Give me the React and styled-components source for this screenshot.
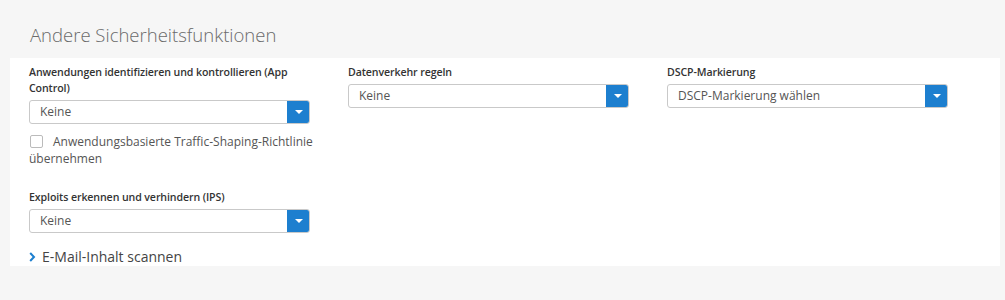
import React from "react";
import styled, { createGlobalStyle } from "styled-components";

const GlobalStyle = createGlobalStyle`
  body {
    margin: 0;
    background: #f6f6f6;
    font-family: "Open Sans", "Liberation Sans", sans-serif;
  }
`;

const Page = styled.div`
  width: 1005px;
  height: 300px;
  padding: 0 5px 0 10px;
  box-sizing: border-box;
`;

const Heading = styled.h2`
  margin: 0;
  height: 58px;
  padding: 22px 0 0 20px;
  box-sizing: border-box;
  font-size: 18.5px;
  font-weight: 300;
  color: #6a6a6a;
`;

const Panel = styled.div`
  background: #fff;
  padding: 6px 19px 0 19px;
  height: 208px;
  box-sizing: border-box;
`;

const Grid = styled.div`
  display: grid;
  grid-template-columns: 281px 281px 281px;
  column-gap: 38px;
  align-items: start;
`;

const Field = styled.div`
  display: flex;
  flex-direction: column;
  margin-top: ${(p) => p.$mt || 0}px;
`;

const Label = styled.div`
  font-size: 10.6px;
  font-weight: 600;
  line-height: 16px;
  color: #333;
  margin-bottom: 4px;
  letter-spacing: -0.1px;
`;

const SelectBox = styled.div`
  display: flex;
  height: 24px;
  border: 1px solid #c9c9c9;
  border-radius: 3px;
  box-sizing: border-box;
  overflow: hidden;
`;

const SelectText = styled.div`
  flex: 1;
  padding-left: 10px;
  font-size: 12px;
  line-height: 22px;
  color: #555;
`;

const SelectButton = styled.div`
  width: 23px;
  background: #1d7fcf;
  display: flex;
  align-items: center;
  justify-content: center;
  margin: -1px -1px -1px 0;
`;

const Caret = styled.span`
  width: 0;
  height: 0;
  border-left: 4px solid transparent;
  border-right: 4px solid transparent;
  border-top: 4px solid #fff;
`;

const CheckRow = styled.label`
  display: block;
  width: 292px;
  margin-top: 9px;
  font-size: 12px;
  line-height: 17px;
  color: #555;
`;

const Check = styled.span`
  display: inline-block;
  width: 13px;
  height: 13px;
  border: 1px solid #bbb;
  border-radius: 2px;
  box-sizing: border-box;
  vertical-align: -2px;
  margin: 0 10px 0 1px;
  background: #fff;
`;

const Expander = styled.div`
  display: flex;
  align-items: center;
  margin-top: 14px;
  font-size: 14px;
  color: #444;
  line-height: 20px;
`;

const Chevron = styled.svg`
  width: 7px;
  height: 10px;
  margin: 0 6px 0 0;
`;

const Select = ({ value }) => (
  <SelectBox>
    <SelectText>{value}</SelectText>
    <SelectButton>
      <Caret />
    </SelectButton>
  </SelectBox>
);

const App = () => {
  return (
    <>
      <GlobalStyle />
      <Page>
        <Heading>Andere Sicherheitsfunktionen</Heading>
        <Panel>
          <Grid>
            <div>
              <Field>
                <Label>
                  Anwendungen identifizieren und kontrollieren (App Control)
                </Label>
                <Select value="Keine" />
              </Field>
              <CheckRow>
                <Check />
                Anwendungsbasierte Traffic-Shaping-Richtlinie übernehmen
              </CheckRow>
              <Field $mt={22}>
                <Label>Exploits erkennen und verhindern (IPS)</Label>
                <Select value="Keine" />
              </Field>
              <Expander>
                <Chevron viewBox="0 0 7 10">
                  <path
                    d="M1.2 1 L5 5 L1.2 9"
                    fill="none"
                    stroke="#1d7fcf"
                    strokeWidth="2"
                  />
                </Chevron>
                E-Mail-Inhalt scannen
              </Expander>
            </div>
            <Field>
              <Label>Datenverkehr regeln</Label>
              <Select value="Keine" />
            </Field>
            <Field>
              <Label>DSCP-Markierung</Label>
              <Select value="DSCP-Markierung wählen" />
            </Field>
          </Grid>
        </Panel>
      </Page>
    </>
  );
};

export default App;
